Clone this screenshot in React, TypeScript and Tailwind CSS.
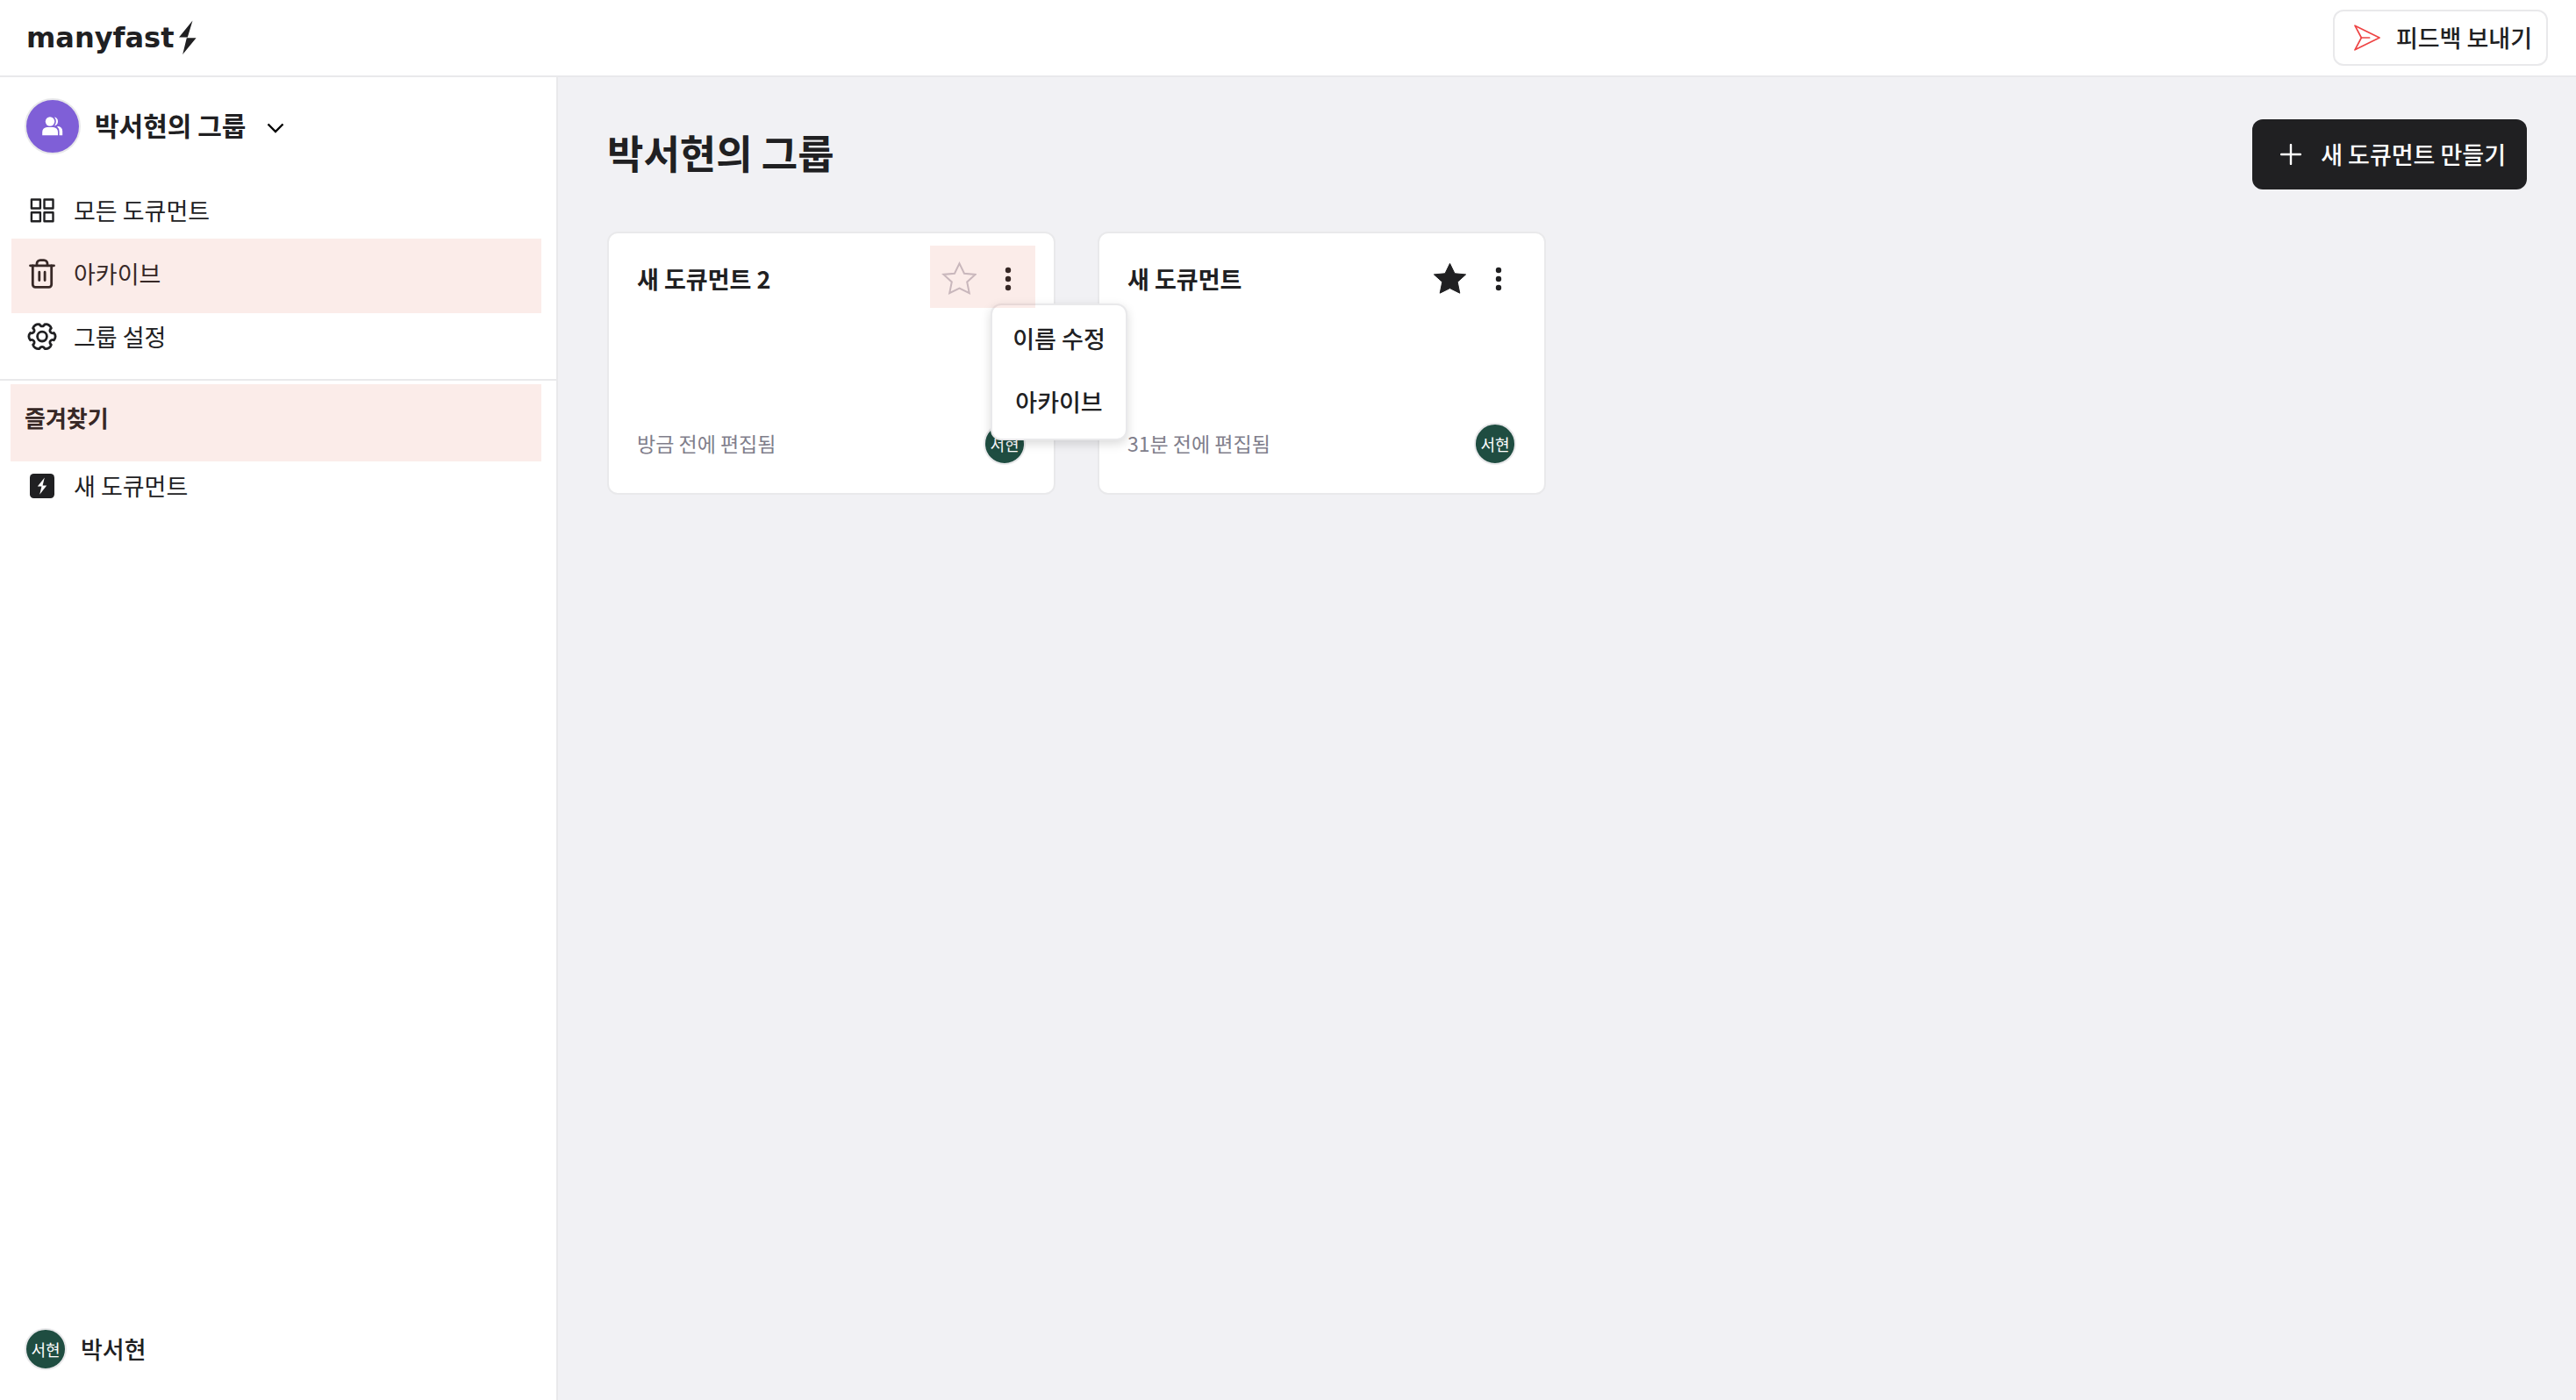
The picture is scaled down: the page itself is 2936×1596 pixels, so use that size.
import { useState } from "react";
import type { ReactNode } from "react";

type DocumentItem = {
  id: string;
  title: string;
  editedAt: string;
  favorite: boolean;
};

const documents: DocumentItem[] = [
  { id: "doc-2", title: "새 도큐먼트 2", editedAt: "방금 전에 편집됨", favorite: false },
  { id: "doc-1", title: "새 도큐먼트", editedAt: "31분 전에 편집됨", favorite: true },
];

const STAR = "M20.5 2.4L26 13.8L38.6 14.9L29.2 23.4L31.8 36.2L20.5 30.6L9.2 36.2L11.8 23.4L2.4 14.9L15 13.8Z";

function GridIcon() {
  return (
    <svg viewBox="0 0 40 40" className="size-10" fill="none" stroke="currentColor" strokeWidth="2.4" strokeLinejoin="round">
      <rect x="7.9" y="7.5" width="10" height="10" />
      <rect x="22.5" y="7.5" width="10" height="10" />
      <rect x="7.9" y="22.3" width="10" height="10" />
      <rect x="22.5" y="22.3" width="10" height="10" />
    </svg>
  );
}

function TrashIcon() {
  return (
    <svg viewBox="0 0 40 40" className="size-10" fill="none" stroke="currentColor" strokeWidth="2.8" strokeLinecap="round" strokeLinejoin="round">
      <path d="M6.5 10.8H33.5" />
      <path d="M9.3 10.8V32.3a3 3 0 0 0 3 3H27.7a3 3 0 0 0 3-3V10.8" />
      <path d="M14 10.8V8.6a4 4 0 0 1 4-4h4a4 4 0 0 1 4 4v2.2" />
      <path d="M16.8 18.2V27.6M23.1 18.2V27.6" />
    </svg>
  );
}

function GearIcon() {
  return (
    <svg viewBox="0 0 40 40" className="size-10" fill="none" stroke="currentColor" strokeWidth="2.8" strokeLinejoin="round">
      <circle cx="20" cy="19.6" r="5.4" />
      <path transform="translate(0 -0.4)" d="M33.4 15.8A6 6 0 0 1 33.4 24.2A3 3 0 0 0 30.4 29.4A6 6 0 0 1 22.8 33.7A3 3 0 0 0 17.2 33.7A6 6 0 0 1 9.6 29.4A3 3 0 0 0 6.6 24.2A6 6 0 0 1 6.6 15.8A3 3 0 0 0 9.6 10.6A6 6 0 0 1 17.2 6.3A3 3 0 0 0 22.8 6.3A6 6 0 0 1 30.4 10.6A3 3 0 0 0 33.4 15.8Z" />
    </svg>
  );
}

function BoltTileIcon() {
  return (
    <svg viewBox="0 0 40 40" className="size-10">
      <rect x="6" y="6" width="28" height="28" rx="4.5" fill="#202022" />
      <path d="M22.8 10.4L14.8 20.6H19.4L17.2 29.8L25.2 19.6H20.6Z" fill="#fff" />
    </svg>
  );
}

function PeopleIcon() {
  return (
    <svg viewBox="0 0 24 22" className="h-[22px] w-6" fill="#fff">
      <circle cx="9" cy="5.5" r="5.2" />
      <path d="M0.2 21.3V17.5a5.5 5.5 0 0 1 5.5-5.5H12.5a5.5 5.5 0 0 1 5.5 5.5V21.3Z" />
      <path d="M14 0.6a5 5 0 0 1 0 9.8a7.4 7.4 0 0 0 0-9.8Z" />
      <path d="M17 11.2a5.2 5.2 0 0 1 6.2 5.2V21.3H19.6V17a7 7 0 0 0-2.6-5.8Z" />
    </svg>
  );
}

function SendIcon() {
  return (
    <svg viewBox="0 0 30 30" className="size-[30px]" fill="none" stroke="#ee4444" strokeWidth="1.7" strokeLinejoin="round" strokeLinecap="round">
      <path d="M1 1.2L29 15L1 28.8L8.4 15Z" />
      <path d="M8.4 15H17.6" />
    </svg>
  );
}

function Avatar() {
  return (
    <span className="flex size-12 shrink-0 items-center justify-center rounded-full border-2 border-[#e8e8ea] bg-[#1f4d41] text-[18px] leading-none font-normal text-white">
      서현
    </span>
  );
}

function Highlight({ className }: { className: string }) {
  return <span aria-hidden="true" className={`pointer-events-none absolute bg-[#df614a]/12 ${className}`} />;
}

function NavItem({ icon, label, marked }: { icon: ReactNode; label: string; marked?: boolean }) {
  return (
    <li className="relative">
      <a href="#" className="flex h-[72px] items-center gap-4 px-7 text-[27px]">
        {icon}
        {label}
      </a>
      {marked && <Highlight className="-top-1 -bottom-[9px] left-[13px] right-[17px]" />}
    </li>
  );
}

function Sidebar() {
  return (
    <aside className="flex w-[636px] shrink-0 flex-col border-r-2 border-[#e9e9eb] bg-white">
      <button type="button" className="flex h-28 items-center px-7 text-[30px] font-semibold">
        <span className="flex size-16 items-center justify-center rounded-full border-2 border-[#e8e8ea] bg-[#7f5fd7]">
          <PeopleIcon />
        </span>
        <span className="ml-4 pb-1">박서현의 그룹</span>
        <svg viewBox="0 0 20 12" className="mt-1 ml-6 h-3 w-5" fill="none" stroke="#000" strokeWidth="2.4">
          <path d="M1.5 1.5L10 10L18.5 1.5" />
        </svg>
      </button>
      <ul className="border-b-2 border-[#e9e9eb] pt-1 pb-3">
        <NavItem icon={<GridIcon />} label="모든 도큐먼트" />
        <NavItem icon={<TrashIcon />} label="아카이브" marked />
        <NavItem icon={<GearIcon />} label="그룹 설정" />
      </ul>
      <div className="relative flex h-[84px] items-center px-7">
        <h2 className="text-[26px] font-bold">즐겨찾기</h2>
        <Highlight className="top-1 -bottom-2 left-3 right-[17px]" />
      </div>
      <ul>
        <NavItem icon={<BoltTileIcon />} label="새 도큐먼트" />
      </ul>
      <div className="mt-auto flex items-center gap-4 px-7 pb-[34px] text-[27px] font-medium">
        <Avatar />
        박서현
      </div>
    </aside>
  );
}

function DocumentCard({ item, menuOpen, onToggleMenu }: { item: DocumentItem; menuOpen: boolean; onToggleMenu: () => void }) {
  return (
    <article className="flex h-[300px] flex-col justify-between rounded-xl border-2 border-[#e9e9eb] bg-white p-8">
      <div className="flex items-center justify-between">
        <h3 className="text-[27px] font-semibold">{item.title}</h3>
        <div className="relative flex gap-4">
          <button type="button" aria-label="즐겨찾기" className="size-10">
            <svg viewBox="0 0 40 40" className="size-10">
              {item.favorite ? (
                <path d={STAR} fill="#202022" stroke="#202022" strokeWidth="1" />
              ) : (
                <path d={STAR} fill="none" stroke="#c6c3cc" strokeWidth="2" />
              )}
            </svg>
          </button>
          <div className="relative size-10">
            <button type="button" aria-label="더보기" aria-expanded={menuOpen} onClick={onToggleMenu} className="size-10">
              <svg viewBox="0 0 40 40" className="size-10" fill="#202022">
                <circle cx="20" cy="10" r="3.2" />
                <circle cx="20" cy="20" r="3.2" />
                <circle cx="20" cy="30" r="3.2" />
              </svg>
            </button>
            {menuOpen && (
              <div role="menu" className="absolute top-full left-0 z-10 mt-2 w-[156px] rounded-xl border-2 border-[#e9e9eb] bg-white pt-[2px] pb-[6px] text-[27px] font-medium shadow-[0_4px_12px_rgba(0,0,0,0.15)]">
                <button type="button" role="menuitem" className="h-[72px] w-full">이름 수정</button>
                <button type="button" role="menuitem" className="h-[72px] w-full">아카이브</button>
              </div>
            )}
          </div>
          {menuOpen && <Highlight className="-top-[18px] -right-[11px] -bottom-[13px] -left-[13px] z-20" />}
        </div>
      </div>
      <div className="flex items-center justify-between">
        <p className="pb-[2px] text-[23px] text-[#807e8b]">{item.editedAt}</p>
        <Avatar />
      </div>
    </article>
  );
}

export default function App() {
  const [openMenu, setOpenMenu] = useState<string | null>("doc-2");

  return (
    <div className="flex min-h-screen flex-col bg-[#f1f1f4] font-['Noto_Sans_CJK_KR',sans-serif] leading-10 text-[#202022]">
      <header className="flex h-[88px] items-center justify-between border-b-2 border-[#e9e9eb] bg-white pr-8 pl-[30px]">
        <a href="#" className="flex items-center gap-[6px]">
          <span className="font-['DejaVu_Sans',sans-serif] text-[32px] leading-10 font-bold">manyfast</span>
          <svg viewBox="0 0 20 40" className="h-10 w-5" fill="#202022">
            <path d="M15.5 0.5L0 19.5H9.8ZM19.6 20.2H8.8L4.2 39Z" />
          </svg>
        </a>
        <button type="button" className="flex h-16 items-center gap-[18px] rounded-xl border-2 border-[#e9e9eb] pr-4 pl-[22px] text-[27px] font-medium">
          <SendIcon />
          피드백 보내기
        </button>
      </header>
      <div className="flex grow">
        <Sidebar />
        <main className="min-w-0 grow px-14 py-12">
          <div className="flex items-center justify-between">
            <h1 className="pb-1 text-[45px] font-bold">박서현의 그룹</h1>
            <button type="button" className="flex h-20 items-center gap-[22px] rounded-xl bg-[#202022] pr-6 pl-8 text-[27px] font-medium text-white">
              <svg viewBox="0 0 24 24" className="size-6" stroke="currentColor" strokeWidth="2.4" strokeLinecap="round">
                <path d="M12 1V23M1 12H23" />
              </svg>
              새 도큐먼트 만들기
            </button>
          </div>
          <div className="mt-12 grid grid-cols-4 gap-12">
            {documents.map((item) => (
              <DocumentCard
                key={item.id}
                item={item}
                menuOpen={openMenu === item.id}
                onToggleMenu={() => setOpenMenu(openMenu === item.id ? null : item.id)}
              />
            ))}
          </div>
        </main>
      </div>
    </div>
  );
}
